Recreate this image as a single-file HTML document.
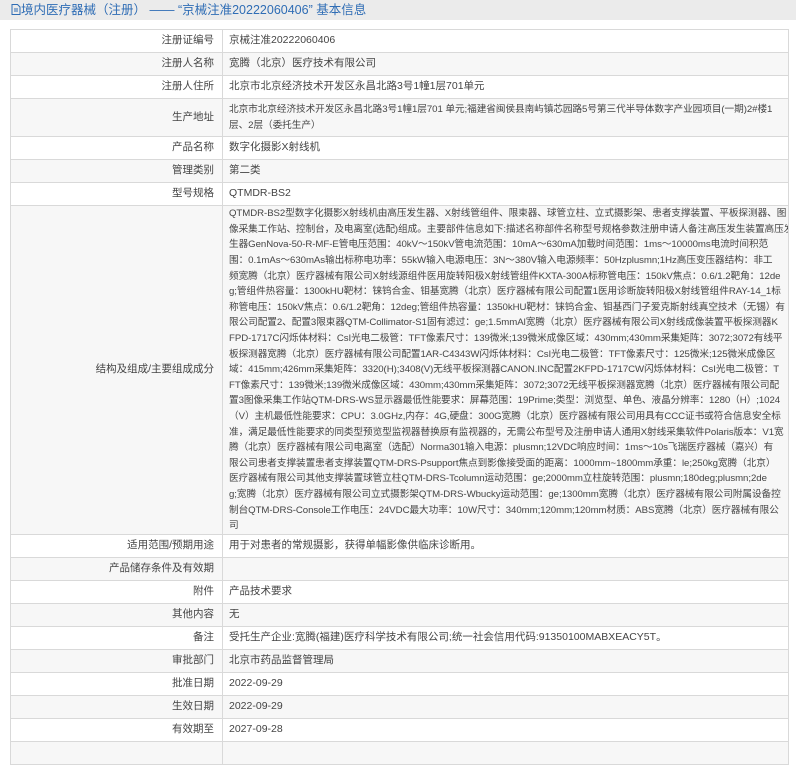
<!DOCTYPE html>
<html><head><meta charset="utf-8"><style>
html,body{margin:0;padding:0;background:#fff;width:796px;height:748px;overflow:hidden;font-family:"Liberation Sans","Noto Sans CJK SC",sans-serif;}
.hd{position:absolute;left:0;top:0;width:796px;height:20px;background:#ebebeb;color:#2f6db5;font-size:12.5px;line-height:20px;}
.hd span{position:absolute;left:11px;top:0;white-space:nowrap;}
table{position:absolute;left:10px;top:29px;width:779px;border-collapse:collapse;table-layout:fixed;font-size:10.5px;color:#444;}
td{border:1px solid #d9d9d9;height:22px;padding:0 6px;line-height:15.6px;white-space:nowrap;overflow:hidden;}
td.l{text-align:right;padding-right:8px;}
td.b{font-size:9.65px;letter-spacing:-0.05px;}
tr:nth-child(even) td{background:#f7f7f7;}
</style></head><body>
<div class="hd"><span><svg width="10" height="11" viewBox="0 0 10 11" style="vertical-align:-1px"><path d="M1 .5h5.5l2.5 2.5v7.5H1z" fill="none" stroke="#2f6db5"/><path d="M3 5h4M3 7h4" stroke="#2f6db5"/></svg>境内医疗器械（注册） —— “京械注准20222060406” 基本信息</span></div>
<table>
<colgroup><col style="width:212px"><col></colgroup>
<tr><td class="l">注册证编号</td><td>京械注准20222060406</td></tr>
<tr><td class="l">注册人名称</td><td>宽腾（北京）医疗技术有限公司</td></tr>
<tr><td class="l">注册人住所</td><td>北京市北京经济技术开发区永昌北路3号1幢1层701单元</td></tr>
<tr><td class="l" style="height:37px">生产地址</td><td class="b">北京市北京经济技术开发区永昌北路3号1幢1层701 单元;福建省闽侯县南屿镇芯园路5号第三代半导体数字产业园项目(一期)2#楼1<br>层、2层（委托生产）</td></tr>
<tr><td class="l">产品名称</td><td>数字化摄影X射线机</td></tr>
<tr><td class="l">管理类别</td><td>第二类</td></tr>
<tr><td class="l">型号规格</td><td>QTMDR-BS2</td></tr>
<tr><td class="l" style="height:328px">结构及组成/主要组成成分</td><td class="b">QTMDR-BS2型数字化摄影X射线机由高压发生器、X射线管组件、限束器、球管立柱、立式摄影架、患者支撑装置、平板探测器、图<br>像采集工作站、控制台，及电离室(选配)组成。主要部件信息如下:描述名称部件名称型号规格参数注册申请人备注高压发生装置高压发<br>生器GenNova-50-R-MF-E管电压范围：40kV～150kV管电流范围：10mA～630mA加载时间范围：1ms～10000ms电流时间积范<br>围：0.1mAs～630mAs输出标称电功率：55kW输入电源电压：3N～380V输入电源频率：50Hzplusmn;1Hz高压变压器结构：非工<br>频宽腾（北京）医疗器械有限公司X射线源组件医用旋转阳极X射线管组件KXTA-300A标称管电压：150kV焦点：0.6/1.2靶角：12de<br>g;管组件热容量：1300kHU靶材：铼钨合金、钼基宽腾（北京）医疗器械有限公司配置1医用诊断旋转阳极X射线管组件RAY-14_1标<br>称管电压：150kV焦点：0.6/1.2靶角：12deg;管组件热容量：1350kHU靶材：铼钨合金、钼基西门子爱克斯射线真空技术（无锡）有<br>限公司配置2、配置3限束器QTM-Collimator-S1固有滤过：ge;1.5mmAl宽腾（北京）医疗器械有限公司X射线成像装置平板探测器K<br>FPD-1717C闪烁体材料：CsI光电二极管：TFT像素尺寸：139微米;139微米成像区域：430mm;430mm采集矩阵：3072;3072有线平<br>板探测器宽腾（北京）医疗器械有限公司配置1AR-C4343W闪烁体材料：CsI光电二极管：TFT像素尺寸：125微米;125微米成像区<br>域：415mm;426mm采集矩阵：3320(H);3408(V)无线平板探测器CANON.INC配置2KFPD-1717CW闪烁体材料：CsI光电二极管：T<br>FT像素尺寸：139微米;139微米成像区域：430mm;430mm采集矩阵：3072;3072无线平板探测器宽腾（北京）医疗器械有限公司配<br>置3图像采集工作站QTM-DRS-WS显示器最低性能要求：屏幕范围：19Prime;类型：浏览型、单色、液晶分辨率：1280（H）;1024<br>（V）主机最低性能要求：CPU：3.0GHz,内存：4G,硬盘：300G宽腾（北京）医疗器械有限公司用具有CCC证书或符合信息安全标<br>准，满足最低性能要求的同类型预览型监视器替换原有监视器的，无需公布型号及注册申请人通用X射线采集软件Polaris版本：V1宽<br>腾（北京）医疗器械有限公司电离室（选配）Norma301输入电源：plusmn;12VDC响应时间：1ms～10s飞瑞医疗器械（嘉兴）有<br>限公司患者支撑装置患者支撑装置QTM-DRS-Psupport焦点到影像接受面的距离：1000mm~1800mm承重：le;250kg宽腾（北京）<br>医疗器械有限公司其他支撑装置球管立柱QTM-DRS-Tcolumn运动范围：ge;2000mm立柱旋转范围：plusmn;180deg;plusmn;2de<br>g;宽腾（北京）医疗器械有限公司立式摄影架QTM-DRS-Wbucky运动范围：ge;1300mm宽腾（北京）医疗器械有限公司附属设备控<br>制台QTM-DRS-Console工作电压：24VDC最大功率：10W尺寸：340mm;120mm;120mm材质：ABS宽腾（北京）医疗器械有限公<br>司</td></tr>
<tr><td class="l">适用范围/预期用途</td><td>用于对患者的常规摄影，获得单幅影像供临床诊断用。</td></tr>
<tr><td class="l">产品储存条件及有效期</td><td></td></tr>
<tr><td class="l">附件</td><td>产品技术要求</td></tr>
<tr><td class="l">其他内容</td><td>无</td></tr>
<tr><td class="l">备注</td><td>受托生产企业:宽腾(福建)医疗科学技术有限公司;统一社会信用代码:91350100MABXEACY5T。</td></tr>
<tr><td class="l">审批部门</td><td>北京市药品监督管理局</td></tr>
<tr><td class="l">批准日期</td><td>2022-09-29</td></tr>
<tr><td class="l">生效日期</td><td>2022-09-29</td></tr>
<tr><td class="l">有效期至</td><td>2027-09-28</td></tr>
<tr><td class="l"></td><td></td></tr>
</table>
</body></html>
